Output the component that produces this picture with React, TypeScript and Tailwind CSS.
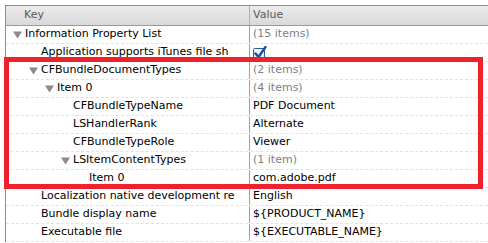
import React from "react";

type Row = {
  key: string;
  value: string;
  level: number;
  expanded?: boolean;
  gray?: boolean;
  checkbox?: boolean;
};

const rows: Row[] = [
  { key: "Information Property List", value: "(15 items)", level: 0, expanded: true, gray: true },
  { key: "Application supports iTunes file sh", value: "", level: 1, checkbox: true },
  { key: "CFBundleDocumentTypes", value: "(2 items)", level: 1, expanded: true, gray: true },
  { key: "Item 0", value: "(4 items)", level: 2, expanded: true, gray: true },
  { key: "CFBundleTypeName", value: "PDF Document", level: 3 },
  { key: "LSHandlerRank", value: "Alternate", level: 3 },
  { key: "CFBundleTypeRole", value: "Viewer", level: 3 },
  { key: "LSItemContentTypes", value: "(1 item)", level: 3, expanded: true, gray: true },
  { key: "Item 0", value: "com.adobe.pdf", level: 4 },
  { key: "Localization native development re", value: "English", level: 1 },
  { key: "Bundle display name", value: "${PRODUCT_NAME}", level: 1 },
  { key: "Executable file", value: "${EXECUTABLE_NAME}", level: 1 },
];

function Triangle() {
  return (
    <svg width="9" height="8" viewBox="0 0 9 8" className="shrink-0">
      <polygon points="0,0.5 9,0.5 4.5,7.5" fill="#8a8a8a" />
    </svg>
  );
}

function Check() {
  return (
    <svg width="14" height="14" viewBox="0 0 14 14">
      <rect x="0.5" y="2.5" width="11" height="11" rx="1" fill="#eaf2fb" stroke="#2f5d9a" />
      <path d="M2.5 7.5 L5.5 11 L12.5 1" fill="none" stroke="#1e4f9b" strokeWidth="2.4" strokeLinecap="round" strokeLinejoin="round" />
    </svg>
  );
}

export default function App() {
  return (
    <div
      className="relative w-[488px] h-[243px] bg-white overflow-hidden text-[11px] text-black"
      style={{ fontFamily: '"DejaVu Sans", "Liberation Sans", sans-serif' }}
    >
      <div className="pl-[5px] pt-[5px]">
        <div className="border-l border-t border-[#8c8c8c]">
          <div className="flex h-[20px] bg-gradient-to-b from-[#ececec] to-[#d9d9d9] border-b border-[#9a9a9a] text-[#5a5a5a]">
            <div className="w-[244px] border-r border-[#b0b0b0] pl-[18px] flex items-center">Key</div>
            <div className="flex-1 pl-[3px] flex items-center">Value</div>
          </div>
          {rows.map((r, i) => {
            const textLeft = 19 + 16 * r.level;
            return (
              <div key={i} className="flex h-[18px] border-b border-dashed border-[#e2e2e2]">
                <div
                  className="w-[244px] border-r border-[#a0a0a0] flex items-center whitespace-nowrap overflow-hidden"
                  style={{ paddingLeft: r.expanded ? textLeft - 12 : textLeft }}
                >
                  {r.expanded && (
                    <span className="w-[12px] flex items-center">
                      <Triangle />
                    </span>
                  )}
                  <span>{r.key}</span>
                </div>
                <div className={`flex-1 pl-[3px] flex items-center whitespace-nowrap ${r.gray ? "text-[#808080]" : ""}`}>
                  {r.checkbox ? <Check /> : r.value}
                </div>
              </div>
            );
          })}
        </div>
      </div>
      <div className="absolute left-[4px] top-[57px] w-[479px] h-[132px] border-[5px] border-[#f0202c] pointer-events-none" />
    </div>
  );
}
